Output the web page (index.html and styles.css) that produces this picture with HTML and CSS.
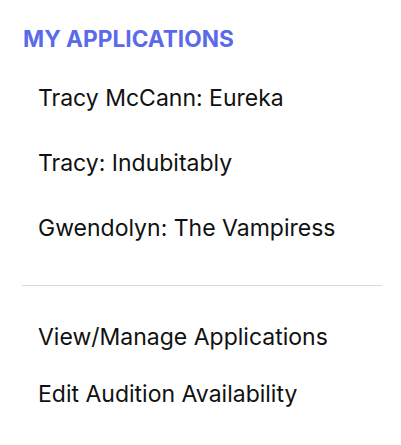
FILE: index.html
```html
<html>
<head>
    <link rel="stylesheet" href="styles.css">
</head>
<body>
    <nav class="apps-menu">
        <h2 class="menu-title">My Applications</h2>
        <ul class="menu-list">
            <li><a href="#" class="menu-link">Tracy McCann: Eureka</a></li>
            <li><a href="#" class="menu-link">Tracy: Indubitably</a></li>
            <li><a href="#" class="menu-link">Gwendolyn: The Vampiress</a></li>
        </ul>
        <hr class="menu-divider">
        <ul class="menu-list menu-list-actions">
            <li><a href="#" class="menu-link">View/Manage Applications</a></li>
            <li><a href="#" class="menu-link">Edit Audition Availability</a></li>
        </ul>
    </nav>
</body>
</html>
```

FILE: styles.css
```css
body {
    margin: 0;
    background-color: #fff;
    font-family: Inter, "Noto Sans", sans-serif;
    color: #111;
}

.apps-menu {
    padding: 26px 19px 0 22px;
}

.menu-title {
    margin: 0 0 30px 1px;
    font-size: 22.7px;
    line-height: 26px;
    font-weight: 700;
    text-transform: uppercase;
    color: #5b6aea;
}

.menu-list {
    list-style: none;
    margin: 0;
    padding: 0;
}

.menu-list li {
    height: 65px;
}

.menu-link {
    display: block;
    padding-left: 16px;
    font-size: 23px;
    line-height: 32px;
    color: #111;
    text-decoration: none;
}

.menu-divider {
    border: none;
    border-top: 1px solid #d9d9d9;
    margin: 8px 0 35px 0;
}

.menu-list-actions li {
    height: 57px;
}
```
